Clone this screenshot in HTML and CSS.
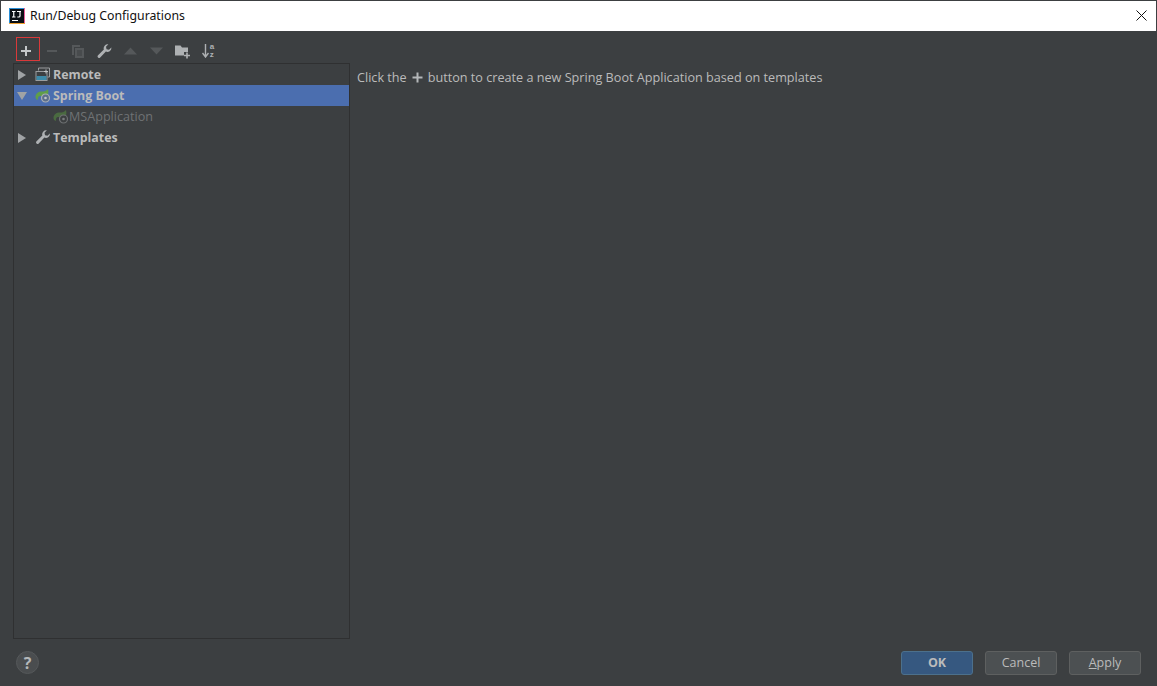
FILE: index.html
```html
<!DOCTYPE html>
<html lang="en">
<head>
<meta charset="utf-8">
<title>Run/Debug Configurations</title>
<link rel="stylesheet" href="styles.css">
</head>
<body>
<div class="dialog">
  <header class="titlebar">
    <svg class="app-icon" width="16" height="16" viewBox="0 0 16 16"><rect width="16" height="16" fill="#0b0f14"/><rect x="0" y="0" width="16" height="1" fill="#2b8fd6"/><rect x="0" y="0" width="1" height="16" fill="#2b8fd6"/><rect x="15" y="0" width="1" height="16" fill="#e85d9b"/><rect x="0" y="15" width="16" height="1" fill="#f0a030"/><path d="M3 3.500h3.500M4.750 3.500v5.500M3 9h3.500M8 3.500h4M11 3.500v4.500q0 1-1.200 1h-1.500" stroke="#fff" stroke-width="1.200" fill="none"/><rect x="3" y="12" width="6" height="1" fill="#fff"/></svg>
    <span class="title">Run/Debug Configurations</span>
    <svg class="close" width="11" height="11" viewBox="0 0 11 11"><path d="M.5.5l10 10M10.500.5l-10 10" stroke="#111" stroke-width="1" fill="none"/></svg>
  </header>
  <div class="content">
    <div class="toolbar">
      <span class="tool tool-add"><svg width="12" height="12" viewBox="0 0 12 12"><path d="M6 1v10M1 6h10" stroke="#c4c7c9" stroke-width="2" fill="none"/></svg></span>
      <span class="tool"><svg width="12" height="12" viewBox="0 0 12 12"><path d="M1 6h10" stroke="#55585a" stroke-width="2" fill="none"/></svg></span>
      <span class="tool"><svg width="14" height="15" viewBox="0 0 14 15"><path d="M1 1h8v2H3v8H1z" fill="#55585a"/><path d="M4 4h9v10H4z" fill="#55585a"/><path d="M6 7h5M6 9h5M6 11h5" stroke="#3c3f41" stroke-width="1" fill="none"/></svg></span>
      <span class="tool"><svg width="15" height="15" viewBox="0 0 14 14"><path d="M13.500 3.500a3.800 3.800 0 0 1-5.200 3.600L3 12.600a1.400 1.400 0 0 1-2-2l5.400-5.400A3.800 3.800 0 0 1 10.600.3L8.400 2.600l.5 2.300 2.300.5 2.200-2.200z" fill="#aeb1b3"/></svg></span>
      <span class="tool"><svg width="13" height="8" viewBox="0 0 13 8"><path d="M6.500 .5L13 7.500H0z" fill="#55585a"/></svg></span>
      <span class="tool"><svg width="13" height="8" viewBox="0 0 13 8"><path d="M0 .5h13L6.500 7.500z" fill="#55585a"/></svg></span>
      <span class="tool"><svg width="16" height="15" viewBox="0 0 16 15"><path d="M1 1.500h5.500l1.500 2h6V8h-4v3.500H1z" fill="#aeb1b3"/><path d="M13 8.500v6M10 11.500h6" stroke="#aeb1b3" stroke-width="1.600" fill="none"/></svg></span>
      <span class="tool sort"><svg width="7" height="14" viewBox="0 0 7 14"><path d="M3.500 0v12.500M.5 9L3.500 13l3-4" stroke="#aeb1b3" stroke-width="1.400" fill="none"/></svg><span class="az">a<br>z</span></span>
    </div>
    <div class="main">
      <aside class="tree">
        <div class="row">
          <span class="arrow right"></span>
          <svg class="icon" width="16" height="15" viewBox="0 0 16 15"><path d="M3.500 3.500V1h11v9h-2" fill="none" stroke="#9a9d9f"/><rect x="1" y="4.500" width="11" height="9" fill="none" stroke="#9a9d9f"/><rect x="1.500" y="9" width="10" height="4" fill="#3d8aa8"/><path d="M11 2.500v4M9 4.500h4" stroke="#c0c3c5" fill="none"/></svg>
          <span class="label bold">Remote</span>
        </div>
        <div class="row selected">
          <span class="arrow down"></span>
          <svg class="icon" width="16" height="15" viewBox="0 0 16 15"><path d="M.5 9C.5 5 4 3 8 3.500c2 .2 3.500-.8 5-2.500 .8 3 .3 5.500-1 7H5c-1.500 0-2.500 2-2 4C1.500 11.500.5 10.500.5 9z" fill="#5f9e48"/><circle cx="10.500" cy="10" r="4" fill="#5c6f8a" stroke="#a8adb3" stroke-width="1.200"/><circle cx="10.500" cy="10" r="1.300" fill="#c0c4c8"/></svg>
          <span class="label bold">Spring Boot</span>
        </div>
        <div class="row child">
          <svg class="icon" width="16" height="15" viewBox="0 0 16 15"><path d="M.5 9C.5 5 4 3 8 3.500c2 .2 3.500-.8 5-2.500 .8 3 .3 5.500-1 7H5c-1.500 0-2.500 2-2 4C1.500 11.500.5 10.500.5 9z" fill="#4a6a40"/><circle cx="10.500" cy="10" r="4" fill="#3c3f41" stroke="#6d7072" stroke-width="1.200"/><circle cx="10.500" cy="10" r="1.300" fill="#7a7d7f"/></svg>
          <span class="label dim">MSApplication</span>
        </div>
        <div class="row">
          <span class="arrow right"></span>
          <svg class="icon" width="16" height="15" viewBox="0 0 14 14"><path d="M13.500 3.500a3.800 3.800 0 0 1-5.200 3.600L3 12.600a1.400 1.400 0 0 1-2-2l5.400-5.400A3.800 3.800 0 0 1 10.600.3L8.400 2.600l.5 2.300 2.300.5 2.200-2.200z" fill="#aeb1b3"/></svg>
          <span class="label bold">Templates</span>
        </div>
      </aside>
      <section class="detail">
        <span>Click the</span>
        <svg class="hint-plus" width="11" height="11" viewBox="0 0 11 11"><path d="M5.500 .5v10M.5 5.500h10" stroke="#b4b7b9" stroke-width="2" fill="none"/></svg>
        <span>button to create a new Spring Boot Application based on templates</span>
      </section>
    </div>
    <footer class="footer">
      <span class="help">?</span>
      <div class="buttons">
        <button class="btn primary">OK</button>
        <button class="btn">Cancel</button>
        <button class="btn"><u>A</u>pply</button>
      </div>
    </footer>
  </div>
</div>
</body>
</html>
```
FILE: styles.css
```css
* { box-sizing: border-box; }
html, body { margin: 0; height: 100%; overflow: hidden; background: #3c3f41; }
body { font-family: "Open Sans", "Noto Sans", sans-serif; }
.dialog { width: 1157px; height: 686px; display: flex; flex-direction: column; padding: 1px 0 0 1px; background: #3c3f41; }
.titlebar { height: 30px; flex: none; background: #fff; display: flex; align-items: center; padding: 0 9px 1px 8px; margin-right: 1px; }
.app-icon { flex: none; }
.title { margin-left: 5px; font: 12.300px "Noto Sans", "Open Sans", sans-serif; color: #111; }
.close { margin-left: auto; }
.content { flex: 1; display: flex; flex-direction: column; min-height: 0; padding: 6px 7px 0 12px; }
.toolbar { height: 26px; flex: none; display: flex; align-items: flex-start; padding-left: 3px; }
.tool { width: 26px; height: 24px; margin-top: 2px; display: flex; align-items: center; justify-content: center; flex: none; }
.tool-add { width: 24px; margin: 0 -1px 0 0; padding: 3px 4px 0 0; border: 1px solid #d9393a; }
.sort { gap: 1px; }
.az { font: bold 8px/8px "Liberation Sans", sans-serif; color: #aeb1b3; text-align: left; }
.main { flex: 1; display: flex; min-height: 0; }
.tree { width: 337px; height: 576px; flex: none; border: 1px solid #2f3031; background: #3c3f41; }
.row { height: 21px; display: flex; align-items: center; padding-left: 4px; }
.selected { background: #4b6eaf; }
.child { padding-left: 39px; }
.arrow { width: 0; height: 0; flex: none; display: block; }
.arrow.right { border-left: 8px solid #a0a3a5; border-top: 5px solid transparent; border-bottom: 5px solid transparent; margin-right: 9px; }
.arrow.down { border-top: 8px solid #a0a3a5; border-left: 5px solid transparent; border-right: 5px solid transparent; margin-left: -1px; margin-right: 8px; }
.icon { flex: none; }
.label { font-size: 12.600px; white-space: nowrap; }
.bold { font-size: 12.400px; }
.row .label { margin-left: 2px; }
.row.child .label { margin-left: 0; }
.bold { font-weight: 700; color: #bbbbbb; }
.dim { color: #6f7274; }
.detail { flex: 1; padding: 6px 0 0 7px; display: flex; align-items: flex-start; font-size: 12.650px; color: #bbbbbb; white-space: nowrap; line-height: 17px; }
.hint-plus { margin: 3px 5px 0 5px; flex: none; }
.footer { height: 47px; flex: none; display: flex; align-items: center; justify-content: space-between; padding: 0 9px 0 3px; }
.help { width: 23px; height: 23px; border-radius: 50%; background: #4a4d4f; border: 1px solid #55585a; color: #b4b7b9; font-weight: 700; font-size: 16px; display: flex; align-items: center; justify-content: center; }
.buttons { display: flex; gap: 12px; }
.btn { width: 72px; height: 24px; padding: 0; background: #4c5052; border: 1px solid #5e6060; border-radius: 3px; color: #bbbbbb; font: 12.500px "Open Sans", sans-serif; }
.btn.primary { background: #365880; border-color: #4c708c; font-weight: 700; }
```
